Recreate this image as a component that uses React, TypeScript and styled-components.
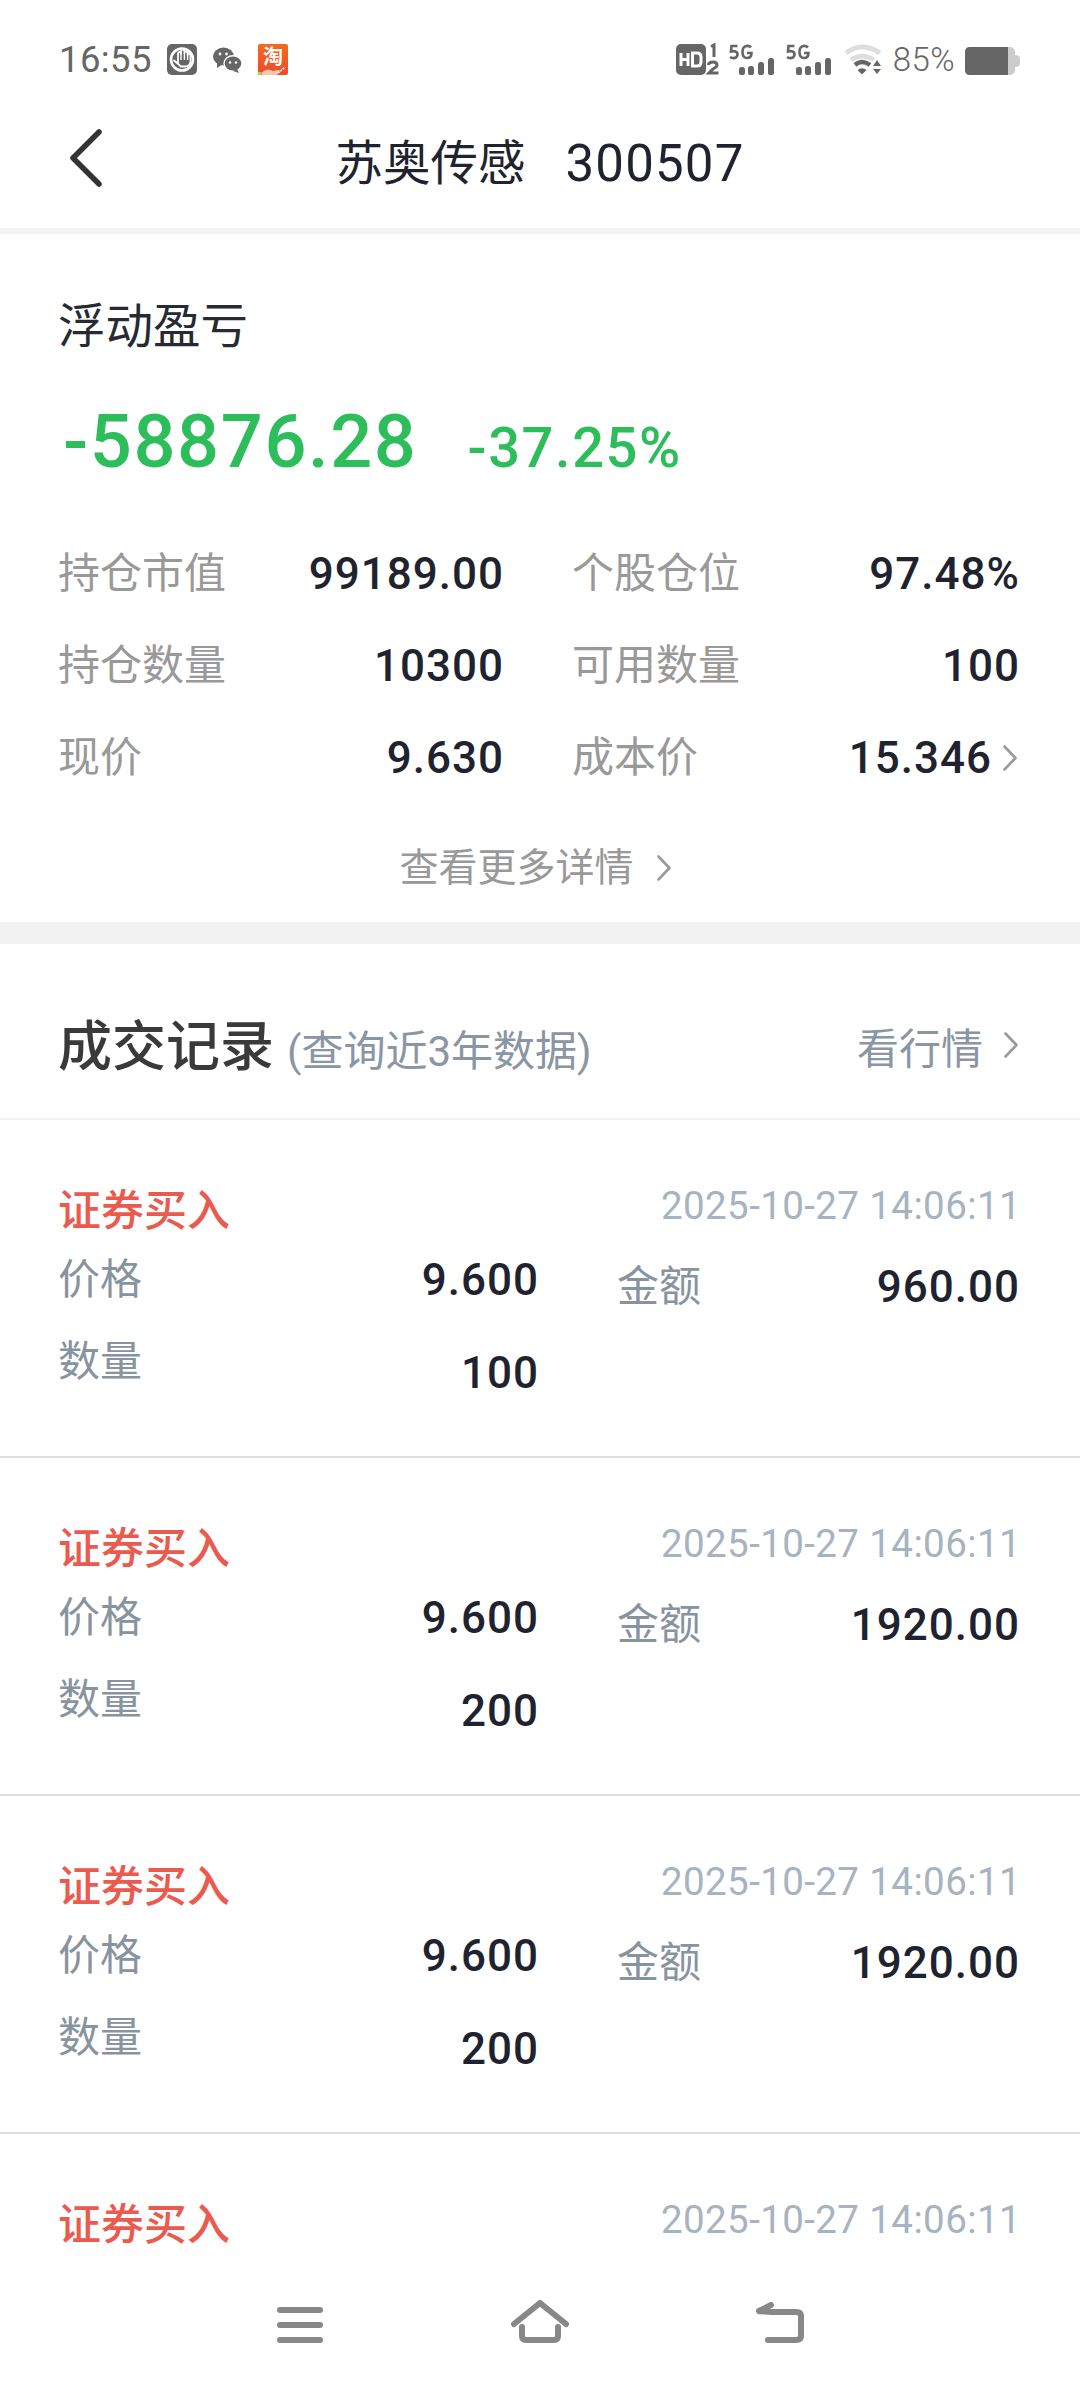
import React from "react";
import styled, { createGlobalStyle } from "styled-components";

const Global = createGlobalStyle`
  html, body { margin: 0; padding: 0; background: #fff; }
  * { box-sizing: border-box; }
  body { font-family: Roboto, "Noto Sans CJK SC", sans-serif; }
`;

const Page = styled.div`
  width: 1080px; height: 2388px; overflow: hidden; background: #fff;
  display: flex; flex-direction: column;
`;
const StatusBar = styled.div`
  height: 90px; padding: 0 60px; flex: none;
  display: flex; justify-content: space-between; align-items: flex-start;
  color: #666;
`;
const StatusGroup = styled.div`
  display: flex; align-items: flex-start; padding-top: 44px;
`;
const Clock = styled.span`
  font-size: 36.5px; line-height: 32px; width: 108px; letter-spacing: 0.4px; margin-left: -1px; padding-right: 1px;
`;
const BatteryText = styled.span`
  font-size: 33px; line-height: 32px; font-weight: 300; margin: 0 10px 0 11px; letter-spacing: 0.4px;
`;
const Nav = styled.div`
  height: 144px; flex: none;
  display: grid; grid-template-columns: 1fr auto 1fr; align-items: center;
  color: #1f2330;
  border-bottom: 6px solid #f2f2f2;
`;
const BackIcon = styled.svg`
  margin-left: 66px; display: block;
`;
const NavTitle = styled.div`
  font-size: 47.5px; line-height: 60px; display: flex; gap: 40px; align-items: center; padding-top: 9px;
`;
const NavCode = styled.span`
  font-size: 51px; letter-spacing: 1.2px;
`;
const Summary = styled.section`
  padding: 63px 60px 0; height: 710px; flex: none;
  border-bottom: 22px solid #f2f2f2;
`;
const SummaryLabel = styled.div`
  font-size: 47.5px; line-height: 60px; color: #262a33; margin-left: -2px;
`;
const PnlRow = styled.div`
  display: flex; align-items: baseline; margin-top: 40px; padding-left: 3px; color: #2dbd5a; height: 90px;
`;
const PnlMain = styled.span`
  font-size: 74px; line-height: 90px; font-weight: 500; letter-spacing: 1.6px;
`;
const PnlPct = styled.span`
  font-size: 56px; line-height: 90px; font-weight: 500; margin-left: 50px; letter-spacing: 1.6px;
`;
const StatGrid = styled.div`
  margin-top: 57px; display: grid; grid-template-columns: 444px 446px; column-gap: 70px; row-gap: 32px;
  width: 960px;
`;
const Stat = styled.div`
  display: flex; justify-content: space-between; align-items: center; height: 60px;
`;
const StatLabel = styled.span`
  font-size: 42px; color: #999; line-height: 60px; margin-left: -2px;
`;
const Num = styled.span`
  font-size: 44px; line-height: 60px; font-weight: 500; color: #1f2330; letter-spacing: 1px; display: flex; align-items: center;
`;
const MoreLink = styled.div`
  margin-top: 50px; display: flex; align-items: center; justify-content: center; gap: 22px;
  font-size: 39px; line-height: 60px; color: #999; padding-right: 9px;
`;
const Records = styled.div`
  flex: 1; min-height: 0; overflow: hidden;
`;
const RecordHead = styled.div`
  height: 176px; padding: 22px 60px 0; display: flex; align-items: center; justify-content: space-between;
  border-bottom: 2px solid #f2f2f2;
`;
const HeadLeft = styled.div`
  display: flex; align-items: baseline; gap: 13px; margin-left: -2px;
`;
const HeadTitle = styled.span`
  font-size: 54px; font-weight: 500; color: #3a3a3a;
`;
const HeadNote = styled.span`
  font-size: 42px; color: #8a96a3;
`;
const HeadRight = styled.div`
  display: flex; align-items: center; gap: 20px; font-size: 42px; color: #8a96a3; padding-top: 6px; margin-right: 1px;
`;
const Trade = styled.div`
  height: 338px; padding: 61px 60px 0; border-bottom: 2px solid #dedede;
`;
const TradeTop = styled.div`
  display: flex; justify-content: space-between; height: 60px;
`;
const TradeType = styled.span`
  font-size: 43px; line-height: 60px; font-weight: 500; color: #ea5a4e; margin-left: -2px;
`;
const TradeTime = styled.span`
  font-size: 38.5px; line-height: 48px; color: #a6b3c0; letter-spacing: 0.4px; padding-top: 1px; margin-right: -1px;
`;
const TradeBody = styled.div`
  display: grid; grid-template-columns: 479px 401px; column-gap: 80px; margin-top: 9px;
`;
const TradeCol = styled.div`
  display: flex; flex-direction: column; gap: 14px;
`;
const TradeCell = styled.div<{ $pad?: number }>`
  display: flex; justify-content: space-between; height: 68px; padding-top: ${(p) => p.$pad ?? 0}px;
`;
const TradeLabel = styled.span`
  font-size: 42px; line-height: 60px; color: #87939e; margin-left: -2px;
`;
const TradeValue = styled.span<{ $drop?: number }>`
  font-size: 44px; line-height: 60px; font-weight: 500; color: #1f2330; letter-spacing: 1px; padding-top: ${(p) => p.$drop ?? 0}px;
`;
const BottomBar = styled.div`
  height: 118px; flex: none; background: #fff;
  display: grid; grid-template-columns: repeat(3, 240px); justify-content: center; justify-items: center; align-items: end;
  padding-bottom: 45px;
`;

const ChevronSvg = styled.svg<{ $ml?: number; $mr?: number }>`
  flex: none; margin-left: ${(p) => p.$ml ?? 0}px; margin-right: ${(p) => p.$mr ?? 0}px;
`;
const Chevron = ({ ml, mr }: { ml?: number; mr?: number }) => (
  <ChevronSvg $ml={ml} $mr={mr} width="16" height="28" viewBox="0 0 16 28" fill="none">
    <path d="M2.5 2.5 L13.5 14 L2.5 25.5" stroke="#9a9a9a" strokeWidth="2.6" strokeLinecap="round" strokeLinejoin="round" />
  </ChevronSvg>
);

const StatusIcon = styled.svg<{ $ml?: number; $mt?: number }>`
  flex: none; overflow: visible; margin-left: ${(p) => p.$ml ?? 0}px; margin-top: ${(p) => p.$mt ?? 0}px;
`;

const HandIcon = () => (
  <StatusIcon width="30" height="31" viewBox="0 0 30 31">
    <rect width="30" height="31" rx="5" fill="#666" />
    <circle cx="15" cy="15.5" r="11" fill="none" stroke="#fff" strokeWidth="2.6" />
    <path d="M7 16.5 L11 19.5 V10 Q11 8 12.5 8 Q14 8 14 10 V7.5 Q14 5.5 15.7 5.5 Q17.4 5.5 17.4 7.5 V9 Q17.4 7.5 19 7.5 Q20.6 7.5 20.6 9 V11 Q20.6 9.5 22 9.5 Q23.5 9.5 23.5 11 V18 Q23 21.5 19 22.5 H14 Z" fill="#666" stroke="#fff" strokeWidth="1.8" strokeLinejoin="round" />
    <path d="M14 10 V16 M17.4 9 V16 M20.6 11 V16" stroke="#fff" strokeWidth="1.4" fill="none" />
  </StatusIcon>
);
const WechatIcon = () => (
  <StatusIcon $ml={16} $mt={3} width="29" height="26" viewBox="0 0 29 26">
    <ellipse cx="10.5" cy="9.5" rx="10.5" ry="9" fill="#666" />
    <path d="M4 15 L4 21 L10 17Z" fill="#666" />
    <ellipse cx="20" cy="16.5" rx="9" ry="7.8" fill="#666" stroke="#fff" strokeWidth="1.4" />
    <path d="M24 22 L26 26 L20 24Z" fill="#666" />
    <circle cx="7" cy="7" r="1.4" fill="#fff" />
    <circle cx="13.5" cy="7" r="1.4" fill="#fff" />
    <circle cx="17" cy="15.5" r="1.2" fill="#fff" />
    <circle cx="23" cy="15.5" r="1.2" fill="#fff" />
  </StatusIcon>
);
const TaoIcon = () => (
  <StatusIcon $ml={16} width="30" height="31" viewBox="0 0 30 31">
    <defs>
      <linearGradient id="tao" x1="0" y1="0" x2="0" y2="1">
        <stop offset="0" stopColor="#f26a1f" />
        <stop offset="1" stopColor="#ee4a2a" />
      </linearGradient>
    </defs>
    <rect width="30" height="31" rx="2" fill="url(#tao)" />
    <text x="15" y="20" textAnchor="middle" fontSize="20" fontWeight="700" fill="#fff" fontFamily="Noto Sans CJK SC, sans-serif">淘</text>
    <path d="M3 29 q6 -6 12 -2 q5 -1 7 -1 l-3 5 H4Z" fill="#f6c9a8" />
    <path d="M20 29 l7 -6" stroke="#fff" strokeWidth="1.6" strokeDasharray="2 1" />
    <rect x="0" y="28" width="3" height="3" fill="#b6d22d" />
  </StatusIcon>
);
const HdIcon = () => (
  <StatusIcon width="43" height="31" viewBox="0 0 43 31">
    <rect width="30" height="31" rx="5" fill="#666" />
    <path d="M5 9 V22 M12 9 V22 M5 15.5 H12" stroke="#fff" strokeWidth="3" fill="none" />
    <path d="M16.5 9 H21 Q25 9 25 13 V18 Q25 22 21 22 H16.5 Z" stroke="#fff" strokeWidth="3" fill="none" />
    <path d="M35 2.5 L38 1 V13" stroke="#666" strokeWidth="3" fill="none" />
    <path d="M32.5 21 Q32.5 18 37 18 Q41 18 41 21 Q41 23 37 25 L33 29 H42.5" stroke="#666" strokeWidth="3" fill="none" />
  </StatusIcon>
);
const Signal = ({ ml }: { ml: number }) => (
  <StatusIcon $ml={ml} width="46" height="31" viewBox="0 0 46 31">
    <path d="M8.5 2 H2.5 L2 7.5 Q6 6.5 8 8.5 Q9.5 11 7 13.5 Q4 15 1 13" stroke="#666" strokeWidth="2.6" fill="none" />
    <path d="M22 3.5 Q20 1.5 17.5 2 Q13.5 2.5 13.5 8 Q13.5 14 18 14 Q22.5 14 22.5 9 H18" stroke="#666" strokeWidth="2.6" fill="none" />
    <rect x="10" y="23" width="6" height="8" rx="2.6" fill="#666" />
    <rect x="19" y="22" width="6" height="9" rx="2.6" fill="#666" />
    <rect x="29" y="18" width="6" height="13" rx="2.6" fill="#666" />
    <rect x="39" y="14" width="6" height="17" rx="2.6" fill="#666" />
  </StatusIcon>
);
const WifiIcon = () => (
  <StatusIcon $ml={12} width="38" height="31" viewBox="0 0 38 31">
    <path d="M2 9 Q18 -3 36 9" stroke="#ddd" strokeWidth="5" fill="none" />
    <path d="M7 16 Q18 8 30 16" stroke="#ddd" strokeWidth="4.5" fill="none" />
    <path d="M11 21 Q18 15 26 21" stroke="#666" strokeWidth="4.5" fill="none" />
    <path d="M13.5 26 Q18 22.5 22.5 26 L18 30.5Z" fill="#666" />
    <path d="M33 16 L37 22 H29Z" fill="#666" />
    <path d="M33 30 L37 25 H29Z" fill="#666" />
  </StatusIcon>
);
const BatteryIcon = () => (
  <StatusIcon $mt={3} width="55" height="28" viewBox="0 0 55 28">
    <rect x="0" y="0" width="50" height="28" rx="5" fill="#ccc" />
    <path d="M5 0 H43 V28 H5 Q0 28 0 23 V5 Q0 0 5 0Z" fill="#666" />
    <path d="M50 8 Q55 8 55 12 V16 Q55 20 50 20Z" fill="#ccc" />
  </StatusIcon>
);

const stats: { label: string; value: string; chevron?: boolean }[] = [
  { label: "持仓市值", value: "99189.00" },
  { label: "个股仓位", value: "97.48%" },
  { label: "持仓数量", value: "10300" },
  { label: "可用数量", value: "100" },
  { label: "现价", value: "9.630" },
  { label: "成本价", value: "15.346", chevron: true },
];
const trades = [
  { qty: "100", amount: "960.00" },
  { qty: "200", amount: "1920.00" },
  { qty: "200", amount: "1920.00" },
  { qty: "", amount: "" },
];

export default function App() {
  return (
    <Page>
      <Global />
      <StatusBar>
        <StatusGroup>
          <Clock>16:55</Clock>
          <HandIcon />
          <WechatIcon />
          <TaoIcon />
        </StatusGroup>
        <StatusGroup>
          <HdIcon />
          <Signal ml={10} />
          <Signal ml={11} />
          <WifiIcon />
          <BatteryText>85%</BatteryText>
          <BatteryIcon />
        </StatusGroup>
      </StatusBar>
      <Nav>
        <BackIcon width="38" height="64" viewBox="0 0 38 64" fill="none">
          <path d="M33 5 L7 31 L33 57" stroke="#333" strokeWidth="5.5" strokeLinecap="round" strokeLinejoin="round" />
        </BackIcon>
        <NavTitle>
          <span>苏奥传感</span>
          <NavCode>300507</NavCode>
        </NavTitle>
      </Nav>
      <Summary>
        <SummaryLabel>浮动盈亏</SummaryLabel>
        <PnlRow>
          <PnlMain>-58876.28</PnlMain>
          <PnlPct>-37.25%</PnlPct>
        </PnlRow>
        <StatGrid>
          {stats.map((s) => (
            <Stat key={s.label}>
              <StatLabel>{s.label}</StatLabel>
              <Num>
                {s.value}
                {s.chevron && <Chevron ml={10} mr={2} />}
              </Num>
            </Stat>
          ))}
        </StatGrid>
        <MoreLink>
          <span>查看更多详情</span>
          <Chevron />
        </MoreLink>
      </Summary>
      <Records>
        <RecordHead>
          <HeadLeft>
            <HeadTitle>成交记录</HeadTitle>
            <HeadNote>(查询近3年数据)</HeadNote>
          </HeadLeft>
          <HeadRight>
            <span>看行情</span>
            <Chevron />
          </HeadRight>
        </RecordHead>
        {trades.map((t, i) => (
          <Trade key={i}>
            <TradeTop>
              <TradeType>证券买入</TradeType>
              <TradeTime>2025-10-27 14:06:11</TradeTime>
            </TradeTop>
            {t.qty && (
              <TradeBody>
                <TradeCol>
                  <TradeCell>
                    <TradeLabel>价格</TradeLabel>
                    <TradeValue>9.600</TradeValue>
                  </TradeCell>
                  <TradeCell>
                    <TradeLabel>数量</TradeLabel>
                    <TradeValue $drop={11}>{t.qty}</TradeValue>
                  </TradeCell>
                </TradeCol>
                <TradeCol>
                  <TradeCell $pad={7}>
                    <TradeLabel>金额</TradeLabel>
                    <TradeValue>{t.amount}</TradeValue>
                  </TradeCell>
                </TradeCol>
              </TradeBody>
            )}
          </Trade>
        ))}
      </Records>
      <BottomBar>
        <svg width="46" height="36" viewBox="0 0 46 36" fill="none">
          <path d="M3 3 H43 M3 18 H43 M3 33 H43" stroke="#888" strokeWidth="6" strokeLinecap="round" />
        </svg>
        <svg width="58" height="43" viewBox="0 0 58 43" fill="none">
          <path d="M3 24 L29 3 L55 24" stroke="#888" strokeWidth="6" strokeLinecap="round" strokeLinejoin="round" />
          <path d="M11 27 V36 Q11 40 15 40 H43 Q47 40 47 36 V27" stroke="#888" strokeWidth="6" strokeLinecap="round" />
        </svg>
        <svg width="48" height="41" viewBox="0 0 48 41" fill="none">
          <path d="M3 9 L15 3 M3 9 L15 10 H40 Q45 10 45 14 V34 Q45 38 40 38 H12" stroke="#888" strokeWidth="6" strokeLinecap="round" strokeLinejoin="round" />
        </svg>
      </BottomBar>
    </Page>
  );
}
